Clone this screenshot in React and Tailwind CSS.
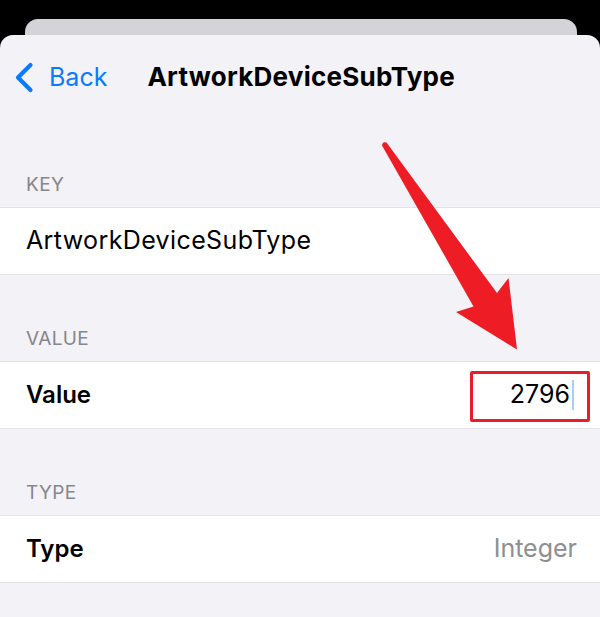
import React from "react";

const font = { fontFamily: "Inter, 'Liberation Sans', sans-serif" };

const SectionHeader = ({ children }) => (
  <div className="h-[86px] flex items-end pb-[13px] px-[26px]">
    <span className="text-[19px] leading-none tracking-[0.02em] text-[#86868b]">{children}</span>
  </div>
);

const Row = ({ children }) => (
  <div className="h-[68px] bg-white border-y border-[#e2e2e7] flex items-center px-[26px]">
    {children}
  </div>
);

const App = () => {
  return (
    <div className="relative w-[600px] h-[617px] bg-black overflow-hidden" style={font}>
      {/* card stacked behind */}
      <div className="absolute left-[25px] right-[23px] top-[19px] h-[30px] rounded-t-[13px] bg-[#d3d3d8]" />

      {/* sheet */}
      <div className="absolute left-0 right-0 top-[35px] bottom-0 rounded-t-[13px] bg-[#f2f2f7]">
        {/* nav bar */}
        <div className="h-[86px] flex items-center pb-[2px]">
          <div className="flex items-center text-[#0a7aff] pl-[14px]">
            <svg width="20" height="31" viewBox="0 0 20 31" fill="none">
              <path d="M16.5 3 L4 15.5 L16.5 28" stroke="#0a7aff" strokeWidth="4.2" strokeLinecap="round" strokeLinejoin="round" />
            </svg>
            <span className="ml-[15px] text-[25px] leading-none">Back</span>
          </div>
          <h1 className="ml-[40px] text-[26px] font-bold leading-none text-black tracking-[0.01em]">
            ArtworkDeviceSubType
          </h1>
        </div>

        <SectionHeader>KEY</SectionHeader>
        <Row>
          <span className="text-[25px] tracking-[0.015em] text-black">ArtworkDeviceSubType</span>
        </Row>

        <SectionHeader>VALUE</SectionHeader>
        <Row>
          <span className="text-[24px] font-semibold text-black">Value</span>
          <span className="ml-auto flex items-center text-[25px] text-black">
            2796
            <span className="ml-[2px] w-[2px] h-[30px] bg-[#a8cdfa]" />
          </span>
        </Row>

        <SectionHeader>TYPE</SectionHeader>
        <Row>
          <span className="text-[24px] font-semibold text-black">Type</span>
          <span className="ml-auto -mr-[3px] text-[25px] text-[#8e8e93]">Integer</span>
        </Row>
      </div>

      {/* annotation: red box around the value */}
      <div className="absolute left-[470px] top-[371px] w-[120px] h-[51px] border-[3px] border-[#e81d2a] rounded-[2px]" />

      {/* annotation: arrow */}
      <svg className="absolute inset-0 pointer-events-none" width="600" height="617" viewBox="0 0 600 617">
        <path
          d="M382 145.5 Q382.5 141 386.5 142.5 L497 293 L508.5 278 L517 349.5 L456 312 L473.5 306.5 Z"
          fill="#ee1c25"
        />
      </svg>
    </div>
  );
};

export default App;
